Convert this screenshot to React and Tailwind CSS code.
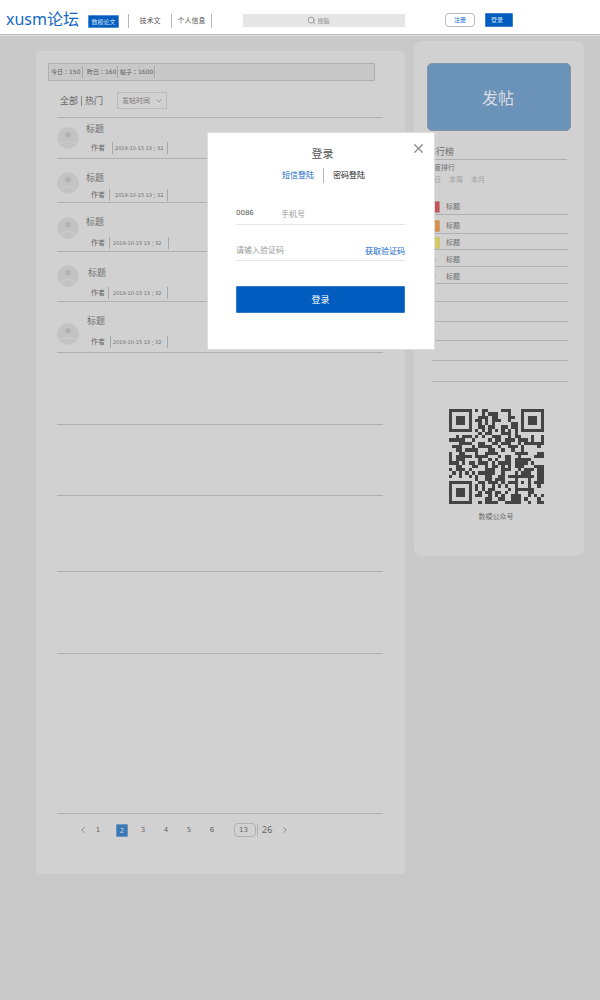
import React from "react";
import { ChevronDown, ChevronLeft, ChevronRight, Search, X } from "lucide-react";

/* ---------- QR code (version 3, error level H, byte mode, mask 0) ---------- */

const SIZE = 29;

function reedSolomon(data, count) {
  const exp = [];
  const log = [];
  let v = 1;
  for (let i = 0; i < 255; i++) {
    exp[i] = v;
    log[v] = i;
    v <<= 1;
    if (v & 256) v ^= 285;
  }
  const mul = (a, b) => (a && b ? exp[(log[a] + log[b]) % 255] : 0);
  let gen = [1];
  for (let i = 0; i < count; i++) {
    const next = new Array(gen.length + 1).fill(0);
    gen.forEach((g, j) => {
      next[j] ^= g;
      next[j + 1] ^= mul(g, exp[i]);
    });
    gen = next;
  }
  const rest = [...data, ...new Array(count).fill(0)];
  for (let i = 0; i < data.length; i++) {
    const lead = rest[i];
    gen.forEach((g, j) => {
      rest[i + j] ^= mul(g, lead);
    });
  }
  return rest.slice(data.length);
}

function qrMatrix(text) {
  const bits = [];
  const push = (value, len) => {
    for (let i = len - 1; i >= 0; i--) bits.push((value >> i) & 1);
  };
  push(4, 4);
  push(text.length, 8);
  for (const ch of text) push(ch.charCodeAt(0), 8);
  push(0, 4);
  const bytes = [];
  for (let i = 0; i < bits.length; i += 8) bytes.push(parseInt(bits.slice(i, i + 8).join(""), 2));
  for (let pad = 0xec; bytes.length < 26; pad ^= 0xfd) bytes.push(pad);
  const blocks = [bytes.slice(0, 13), bytes.slice(13, 26)];
  const checks = blocks.map((b) => reedSolomon(b, 22));
  const words = [];
  for (let i = 0; i < 13; i++) blocks.forEach((b) => words.push(b[i]));
  for (let i = 0; i < 22; i++) checks.forEach((b) => words.push(b[i]));

  const m = Array.from({ length: SIZE }, () => new Array(SIZE).fill(null));
  const ring = (cr, cc, reach, dark) => {
    for (let r = -reach; r <= reach; r++)
      for (let c = -reach; c <= reach; c++)
        if (m[cr + r] && m[cr + r][cc + c] !== undefined)
          m[cr + r][cc + c] = dark(Math.max(Math.abs(r), Math.abs(c)));
  };
  [[3, 3], [3, SIZE - 4], [SIZE - 4, 3]].forEach(([r, c]) => ring(r, c, 4, (d) => d !== 2 && d !== 4));
  ring(22, 22, 2, (d) => d !== 1);
  for (let i = 8; i < SIZE - 8; i++) {
    m[6][i] = i % 2 === 0;
    m[i][6] = i % 2 === 0;
  }
  const level = 2 << 3;
  let rem = level << 10;
  for (let i = 14; i >= 10; i--) if ((rem >> i) & 1) rem ^= 0x537 << (i - 10);
  const format = ((level << 10) | rem) ^ 0x5412;
  for (let i = 0; i < 15; i++) {
    const on = ((format >> i) & 1) === 1;
    m[i < 6 ? i : i < 8 ? i + 1 : SIZE - 15 + i][8] = on;
    m[8][i < 8 ? SIZE - 1 - i : i < 9 ? 7 : 14 - i] = on;
  }
  m[SIZE - 8][8] = true;

  let n = 0;
  let up = true;
  for (let col = SIZE - 1; col > 0; col -= 2) {
    if (col === 6) col--;
    for (let k = 0; k < SIZE; k++) {
      const r = up ? SIZE - 1 - k : k;
      for (const c of [col, col - 1]) {
        if (m[r][c] !== null) continue;
        const bit = n < words.length * 8 ? (words[n >> 3] >> (7 - (n & 7))) & 1 : 0;
        n++;
        m[r][c] = (bit === 1) !== ((r + c) % 2 === 0);
      }
    }
    up = !up;
  }
  return m;
}

function QrCode({ text, className }) {
  const d = qrMatrix(text)
    .flatMap((row, r) => row.map((on, c) => (on ? `M${c} ${r}h1v1h-1z` : "")))
    .join("");
  return (
    <svg viewBox={`0 0 ${SIZE} ${SIZE}`} className={className} shapeRendering="crispEdges" role="img" aria-label="数模公众号">
      <path d={d} fill="#444" />
    </svg>
  );
}

/* ---------- Header ---------- */

function Header() {
  return (
    <header className="flex h-9 items-start border-b border-[#e2e2e2] bg-white">
      <div className="flex h-[35px] w-full items-start border-b border-[#b9bdbb]">
        <a href="#" className="ml-1.5 mt-[7px] w-[82px] whitespace-nowrap text-[16px] leading-6 text-[#1469c7]">
          xusm论坛
        </a>
        <nav className="mt-[14px] flex h-[14px] items-center text-[7px] leading-[14px] text-[#555]">
          <a href="#" className="h-[13px] w-[31px] rounded-[1px] border border-[#4f8ed2] bg-[#005dbf] text-center text-[6px] leading-3 text-[#d5e4f5]">
            数模论文
          </a>
          <a href="#" className="ml-[9px] w-11 border-x border-[#b5b5b5] text-center">技术文</a>
          <a href="#" className="w-10 border-r border-[#b5b5b5] text-center">个人信息</a>
        </nav>
        <label className="ml-[31px] mt-[14px] flex h-[13px] w-[162px] items-center justify-center gap-[2px] bg-[#e6e6e6]">
          <Search className="size-[9px] text-[#888]" />
          <input
            aria-label="搜贴"
            placeholder="搜贴"
            className="h-3 w-6 bg-transparent text-[6px] leading-3 outline-none placeholder:text-[#8c8c8c]"
          />
        </label>
        <button className="ml-10 mt-[13px] h-[14px] w-[30px] rounded-sm border border-[#b8b8b8] bg-white text-[6px] leading-3 text-[#1469c7]">
          注册
        </button>
        <button className="ml-[10px] mt-[13px] h-[14px] w-[28px] rounded-[1px] border border-[#3b80cc] bg-[#005dbf] pr-1 text-[6px] leading-3 text-[#d5e4f5]">
          登录
        </button>
      </div>
    </header>
  );
}

/* ---------- Post list ---------- */

const posts = [
  { id: 1, row: "h-[41px]", avatar: "mt-[9px]", body: "pl-[7px] pt-[5px] gap-[7px]", meta: "pl-[5px]", date: "ml-[7px] w-14 pl-[2px]" },
  { id: 2, row: "h-[44px]", avatar: "mt-[13px]", body: "pl-[7px] pt-[13px] gap-[5px]", meta: "pl-[5px]", date: "ml-1 w-[59px] pl-[5px]" },
  { id: 3, row: "h-[49px]", avatar: "mt-[14px]", body: "pl-[7px] pt-[13px] gap-[9px]", meta: "pl-[5px]", date: "ml-1 w-[60px] pl-[3px]" },
  { id: 4, row: "h-[50px]", avatar: "mt-[13px]", body: "pl-[9px] pt-[15px] gap-[8px]", meta: "pl-[3px]", date: "ml-[3px] w-[60px] pl-1" },
  { id: 5, row: "h-[51px]", avatar: "mt-[21px]", body: "pl-[8px] pt-[13px] gap-[9px]", meta: "pl-[4px]", date: "ml-[5px] w-[58px] pl-[2px]" },
];

const emptyRows = ["h-[72px]", "h-[71px]", "h-[76px]", "h-[82px]", "h-[160px]"];

function Avatar({ className }) {
  return (
    <svg viewBox="0 0 22 22" className={"size-[22px] shrink-0 " + className} aria-hidden="true">
      <circle cx="11" cy="11" r="10.7" fill="#c3c3c3" />
      <circle cx="11" cy="7.8" r="2.8" fill="#b2b2b2" />
      <path d="M2.5 17C6 14 16 14 19.5 17" fill="none" stroke="#cfcfcf" strokeWidth="0.9" />
    </svg>
  );
}

function Post({ post }) {
  return (
    <li className={"flex border-b border-[#b0b0b0] " + post.row}>
      <Avatar className={post.avatar} />
      <div className={"flex flex-col " + post.body}>
        <a href="#" className="text-[9px] leading-3 text-[#6f6f6f]">标题</a>
        <div className={"flex h-3 items-center " + post.meta}>
          <span className="text-[7px] leading-3 text-[#6a6a6a]">作者</span>
          <time
            dateTime="2019-10-15T13:32"
            className={
              "h-3 whitespace-nowrap border-x border-[#a8a8a8] font-['DejaVu_Sans','Noto_Sans_CJK_TC',sans-serif] text-[5px] leading-3 text-[#707070] " +
              post.date
            }
          >
            2019-10-15 13：32
          </time>
        </div>
      </div>
    </li>
  );
}

function Stat({ label, value, className }) {
  return (
    <span className={"h-3 whitespace-nowrap border-r border-[#a8a8a8] " + className}>
      {label}：{value}
    </span>
  );
}

function Pagination() {
  return (
    <nav
      aria-label="分页"
      className="mt-2 flex h-4 items-center font-['DejaVu_Sans',sans-serif] text-[7px] leading-3 text-[#666]"
    >
      <button aria-label="上一页"><ChevronLeft className="size-[10px] text-[#808080]" /></button>
      <button className="ml-1 w-3">1</button>
      <button aria-current="page" className="ml-3 h-[13px] w-3 rounded-[1px] border border-[#6a93bf] bg-[#3c77b5] text-[#c3d3e3]">2</button>
      <div className="ml-[9px] flex gap-[11px]">
        {["3", "4", "5", "6"].map((n) => (
          <button key={n} className="w-3">{n}</button>
        ))}
      </div>
      <input
        aria-label="页码"
        defaultValue="13"
        className="ml-4 h-[14px] w-[22px] rounded-sm border border-[#b0b0b0] bg-transparent pl-1 text-[7px] outline-none"
      />
      <span className="ml-px h-3 border-l border-[#b0b0b0] pl-1 font-['Noto_Sans',sans-serif] text-[9px]">26</span>
      <button aria-label="下一页" className="ml-2"><ChevronRight className="size-[10px] text-[#808080]" /></button>
    </nav>
  );
}

function Feed() {
  return (
    <main className="mt-[15px] flex h-[823px] flex-1 flex-col rounded-sm bg-[#d1d1d1] pl-3 pr-[22px] pt-3">
      <div className="mr-2 flex h-[18px] items-center rounded-[1px] border border-[#b0b0b0] bg-[#c8c8c8] pl-[2px] font-['DejaVu_Sans','Noto_Sans_CJK_TC',sans-serif] text-[6px] leading-3 text-[#5c5c5c]">
        <Stat label="今日" value="150" className="w-8" />
        <Stat label="昨日" value="160" className="w-[35px] pl-1" />
        <Stat label="帖子" value="1600" className="w-[37px] pl-[2px]" />
      </div>
      <div className="ml-3 mt-[11px] flex h-[17px] items-center">
        <div className="flex w-[57px] items-center gap-[3px] text-[9px] leading-3 text-[#666]">
          <button>全部</button>
          <span className="h-[10px] w-px bg-[#888]" />
          <button>热门</button>
        </div>
        <label className="relative flex h-[17px] w-[50px] items-center border border-[#bbb]">
          <select
            aria-label="排序"
            className="h-full w-full appearance-none bg-transparent pl-1 text-[7px] leading-3 text-[#7a7a7a] outline-none"
          >
            <option>发帖时间</option>
          </select>
          <ChevronDown className="pointer-events-none absolute right-[3px] size-2 text-[#777]" />
        </label>
      </div>
      <ul className="ml-[9px] mt-2 border-t border-[#b0b0b0]">
        {posts.map((post) => (
          <Post key={post.id} post={post} />
        ))}
        {emptyRows.map((height) => (
          <li key={height} className={"border-b border-[#b0b0b0] " + height} />
        ))}
      </ul>
      <div className="ml-[30px]">
        <Pagination />
      </div>
    </main>
  );
}

/* ---------- Sidebar ---------- */

const ranking = [
  { rank: 1, row: "h-4 pb-px", badge: "border-[#c58c8c] bg-[#c4545a] text-[#ddd]" },
  { rank: 2, row: "h-[19px] pb-px", badge: "border-[#c9a27c] bg-[#d98f47] text-[#ddd]" },
  { rank: 3, row: "h-4", badge: "border-[#c9c48c] bg-[#d2ca5a] text-[#ddd]" },
  { rank: 4, row: "h-[17px]", badge: "border-transparent text-[#aaa]" },
  { rank: 5, row: "h-[17px]", badge: "border-transparent text-[#aaa]" },
];

const emptyRanks = ["h-[18px]", "h-5", "h-[19px]", "h-5", "h-[21px]"];

function Sidebar() {
  return (
    <aside className="mt-[5px] h-[515px] w-[170px] shrink-0 rounded-lg bg-[#d1d1d1] px-[13px] pt-[22px] text-[7px] leading-3 text-[#6f6f6f]">
      <button className="h-[68px] w-full rounded-[5px] border border-[#8593a3] bg-[#6b92b8] pr-0.5 pt-0.5 text-[16px] leading-6 text-[#d8dde2]">
        发帖
      </button>
      <h2 className="mr-1 mt-[15px] border-b border-[#b0b0b0] pb-px text-[9px] leading-3 text-[#6a6a6a]">排行榜</h2>
      <p className="mt-[2px]">热度排行</p>
      <div className="flex gap-2 text-[#a3a3a3]">
        <button>今日</button>
        <button>本周</button>
        <button>本月</button>
      </div>
      <ol className="ml-[5px] mr-[3px] mt-[13px]">
        {ranking.map((item) => (
          <li key={item.rank} className={"flex items-end border-b border-[#b0b0b0] " + item.row}>
            <span className={"-ml-1 w-3 rounded-[1px] border text-center leading-[10px] " + item.badge}>{item.rank}</span>
            <a href="#" className="ml-1.5">标题</a>
          </li>
        ))}
        {emptyRanks.map((height, i) => (
          <li key={i} className={"border-b border-[#b0b0b0] " + height} />
        ))}
      </ol>
      <figure className="mt-[27px] flex flex-col items-center pr-1.5">
        <QrCode text="http://www.xiaopiu.com" className="size-[95px]" />
        <figcaption className="mt-[7px]">数模公众号</figcaption>
      </figure>
    </aside>
  );
}

/* ---------- Login dialog ---------- */

function LoginDialog() {
  return (
    <div className="pointer-events-none absolute inset-x-0 top-[132px] flex justify-center pl-[42px]">
      <form
        role="dialog"
        aria-label="登录"
        className="pointer-events-auto relative flex h-[218px] w-[228px] flex-col border border-[#dedede] bg-white pl-7 pr-[29px] pt-[13px]"
      >
        <button type="button" aria-label="关闭" className="absolute right-2 top-2">
          <X className="size-[15px] text-[#8a8a8a]" strokeWidth={2} />
        </button>
        <h1 className="pl-1 text-center text-[11px] leading-4 text-[#555]">登录</h1>
        <div className="mt-[5px] flex h-4 items-center justify-center gap-[9px] pl-1.5 text-[8px] leading-4">
          <button type="button" className="text-[#1469c7]">短信登陆</button>
          <span className="h-[15px] w-px bg-[#b5b5b5]" />
          <button type="button" className="text-[#222]">密码登陆</button>
        </div>
        <label className="mt-[25px] flex h-[11px] items-center text-[8px]">
          <span className="w-[45px] font-['DejaVu_Sans',sans-serif] text-[7px] text-[#555]">0086</span>
          <input
            aria-label="手机号"
            placeholder="手机号"
            className="h-3 min-w-0 flex-1 bg-transparent leading-3 outline-none placeholder:text-[#999]"
          />
        </label>
        <div className="mt-[5px] border-t border-[#e5e5e5]" />
        <div className="mt-[19px] flex h-[17px] items-center justify-between border-b border-[#e5e5e5] text-[8px] leading-3">
          <input
            aria-label="验证码"
            placeholder="请输入验证码"
            className="mb-1 h-3 w-20 bg-transparent outline-none placeholder:text-[#999]"
          />
          <button type="button" className="mb-0.5 text-[#1469c7]">获取验证码</button>
        </div>
        <button className="mt-[25px] h-[27px] rounded-[1px] border border-[#2f79cb] bg-[#005dbf] text-[9px] leading-4 text-white">
          登录
        </button>
      </form>
    </div>
  );
}

export default function App() {
  return (
    <div className="relative min-h-screen bg-[#c9c9c9] font-['Noto_Sans','Noto_Sans_CJK_SC',sans-serif]">
      <Header />
      <div className="flex items-start gap-[9px] pl-9 pr-4">
        <Feed />
        <Sidebar />
      </div>
      <LoginDialog />
    </div>
  );
}
